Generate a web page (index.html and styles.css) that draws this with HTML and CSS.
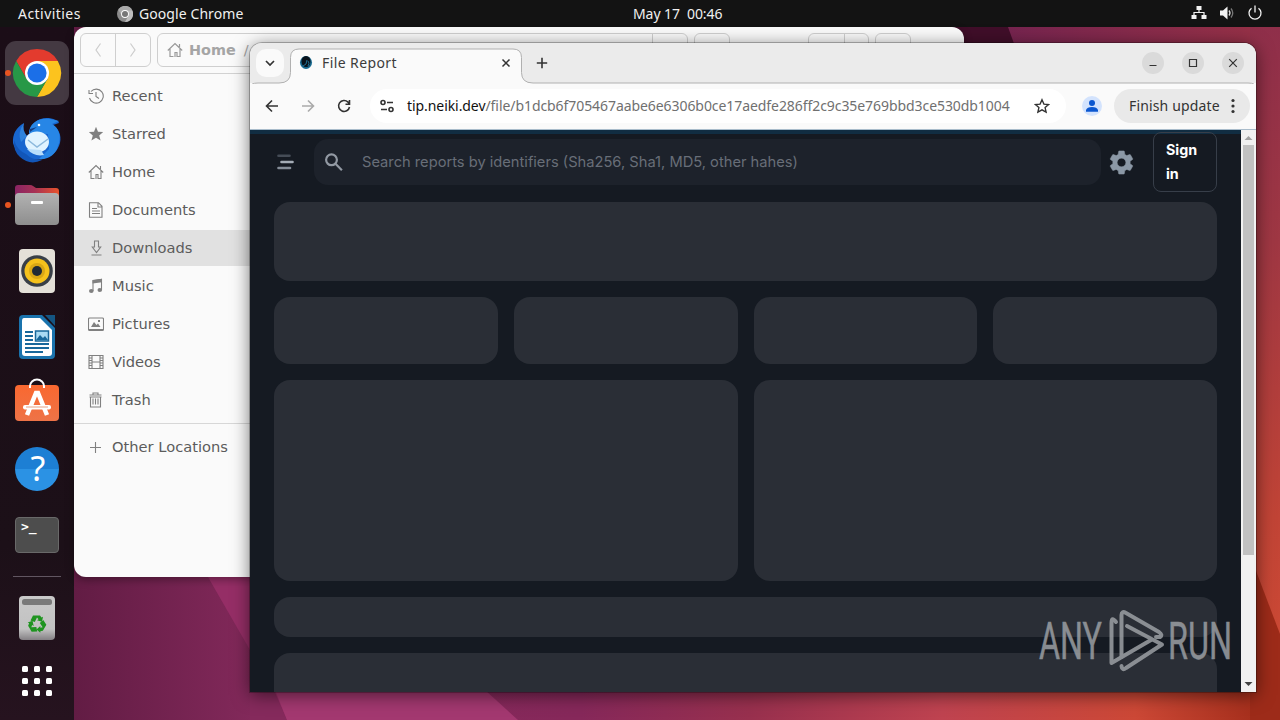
FILE: index.html
```html
<!DOCTYPE html>
<html lang="en">
<head>
<meta charset="utf-8">
<title>File Report</title>
<link rel="stylesheet" href="styles.css">
</head>
<body>
<div class="desktop">
  <svg class="wallpaper" width="1280" height="720" viewBox="0 0 1280 720">
    <defs>
      <linearGradient id="w1" x1="74" x2="1280" y1="0" y2="0" gradientUnits="userSpaceOnUse">
        <stop offset="0" stop-color="#621c44"/><stop offset=".16" stop-color="#852a5c"/><stop offset=".42" stop-color="#86285a"/><stop offset=".56" stop-color="#98304e"/><stop offset=".72" stop-color="#bf4350"/><stop offset=".88" stop-color="#cc4836"/><stop offset="1" stop-color="#9e2a17"/>
      </linearGradient>
      <linearGradient id="w2" x1="1008" x2="1280" y1="27" y2="27" gradientUnits="userSpaceOnUse">
        <stop offset="0" stop-color="#76244f"/><stop offset="1" stop-color="#993246"/>
      </linearGradient>
      <linearGradient id="w3" x1="0" x2="0" y1="27" y2="640" gradientUnits="userSpaceOnUse">
        <stop offset="0" stop-color="#8f2f4a"/><stop offset=".35" stop-color="#9f3743"/><stop offset=".8" stop-color="#c14436"/><stop offset="1" stop-color="#cc4935"/>
      </linearGradient>
    </defs>
    <rect width="1280" height="720" fill="url(#w1)"/>
    <path d="M208 577H300V720H287L275 693Q262 670 250 650Z" fill="#952e66"/>
    <path d="M250 650L275 693L287 720H250Z" fill="#852a5c"/>
    <path d="M275 690H485L518 720H287Z" fill="#a33870"/>
    <path d="M950 27H1060V60H950Z" fill="#400e29"/>
    <path d="M1008 27H1280V60H1020Z" fill="url(#w2)"/>
    <path d="M1250 27H1280V640L1250 555Z" fill="url(#w3)"/>
    <path d="M1250 555L1280 634V720H1250Z" fill="#9d2b19"/>
  </svg>

  <header class="topbar">
    <span class="activities">Activities</span>
    <span class="appmenu">
      <svg width="16" height="16" viewBox="0 0 16 16"><circle cx="8" cy="8" r="8" fill="#8b8b8b"/><path d="M8 4.200h7.200A8 8 0 0 0 1.200 3.800L4.600 9.600" fill="#a9a9a9"/><path d="M11.500 9.800L8 16a8 8 0 0 0 7.200-11.800H8" fill="#bdbdbd"/><circle cx="8" cy="8" r="3.900" fill="#fff"/><circle cx="8" cy="8" r="3" fill="#777"/></svg>
      <span>Google Chrome</span>
    </span>
    <span class="clock">May 17&nbsp; 00:46</span>
    <span class="tray">
      <svg width="16" height="16" viewBox="0 0 16 16" fill="#f2f2f2"><path d="M5.500 1h5v4h-5zM.5 10h5v4h-5zM10.500 10h5v4h-5z"/><path d="M8 5v2.500M3 10V7.500H13V10" fill="none" stroke="#f2f2f2" stroke-width="1.200"/></svg>
      <svg width="16" height="16" viewBox="0 0 16 16"><path d="M1 5.500h3L8.500 1.500v13L4 10.500H1z" fill="#f2f2f2"/><path d="M10 5.500q2 2.500 0 5" fill="none" stroke="#ddd" stroke-width="1.300"/><path d="M12 3.500q3.500 4.500 0 9" fill="none" stroke="#777" stroke-width="1.300"/></svg>
      <svg width="16" height="16" viewBox="0 0 16 16" fill="none" stroke="#f2f2f2" stroke-width="1.300"><path d="M4.500 3.200a6 6 0 1 0 7 0M8 .5v7"/></svg>
    </span>
  </header>

  <nav class="dock">
    <div class="dock-item active running">
      <svg width="50" height="50" viewBox="0 0 50 50"><path d="M25 13H45.800A24 24 0 0 0 4.200 13L14.600 31z" fill="#e33b2e"/><path d="M35.400 31L25 49A24 24 0 0 0 45.800 13H25z" fill="#fcc31e"/><path d="M14.600 31L4.200 13A24 24 0 0 0 25 49L35.400 31z" fill="#279847"/><circle cx="25" cy="25" r="12" fill="#fff"/><circle cx="25" cy="25" r="9.600" fill="#1b6fe8"/></svg>
    </div>
    <div class="dock-item">
      <svg class="bird" width="50" height="50" viewBox="0 0 50 50">
        <path d="M12 7Q0 14 1 27A24 21 0 0 0 48 27C50 19 46 12 41 9L47 7Q47 4 37 2C26 1 18 8 17 18L13 21Q9 14 12 7Z" fill="#1866cf"/>
        <path d="M17 17C17 8 26 1 38 3L47 5L40 8C47 12 50 21 46 30C44 39 35 44 27 43L37 33L36 18Z" fill="#2786e6"/>
        <path d="M2 24Q5 34 14 38Q20 44 30 44Q18 50 8 41Q1 35 2 24Z" fill="#1256b8"/>
        <path d="M12 7Q5 17 9 26L15 20Q10 14 12 7Z" fill="#2f83dd"/>
        <ellipse cx="25" cy="26" rx="12" ry="10.500" fill="#e0f3ff"/><path d="M15 33Q22 41 32 39L29 34Z" fill="#b7defb"/><path d="M16 24l9 7 11-8" fill="none" stroke="#8cb9dd" stroke-width="1.500"/><circle cx="27" cy="9" r="1.300" fill="#fff"/><path d="M18 13l7-2-7 5z" fill="#153d83"/>
      </svg>
    </div>
    <div class="dock-item running">
      <svg width="46" height="42" viewBox="0 0 46 42"><defs><linearGradient id="fo"><stop offset="0" stop-color="#8a2464"/><stop offset=".45" stop-color="#a73255"/><stop offset="1" stop-color="#e9532c"/></linearGradient><linearGradient id="fg" x2="0" y2="1"><stop stop-color="#b2b2b2"/><stop offset="1" stop-color="#8e8e8e"/></linearGradient></defs><path d="M1 4q0-3 3-3H16q2 0 3 1l3 2H42q3 0 3 3V20H1z" fill="url(#fo)"/><rect x="1" y="9" width="44" height="32" rx="4" fill="url(#fg)"/><rect x="17" y="17" width="12" height="3" rx="1" fill="#fff"/></svg>
    </div>
    <div class="dock-item">
      <svg width="38" height="46" viewBox="0 0 38 46"><rect x="1" y="1" width="36" height="44" rx="4" fill="#e4e0d8"/><circle cx="19" cy="23" r="15.800" fill="#393f47"/><circle cx="19" cy="23" r="12.500" fill="#f6c21c"/><circle cx="19" cy="23" r="8" fill="#d9a715"/><circle cx="19" cy="23" r="5" fill="#202a35"/></svg>
    </div>
    <div class="dock-item">
      <svg width="38" height="46" viewBox="0 0 38 46"><path d="M5 1H24L37 14V41q0 4-4 4H5q-4 0-4-4V5q0-4 4-4z" fill="#1a73ad"/><path d="M27 1h10v11z" fill="#145582"/><path d="M6 4H22L34 16V39q0 3-3 3H7q-3 0-3-3V7q0-3 2-3z" fill="#fff"/><path d="M7 18h8M7 22h8M7 26h8M7 30h24M7 34h24M7 38h18" stroke="#19689b" stroke-width="2"/><rect x="17.500" y="17" width="13" height="10" fill="#a9daf3" stroke="#19689b" stroke-width="1.500"/><path d="M18 26l4-5 3 3 2-2 3 4z" fill="#19689b"/></svg>
    </div>
    <div class="dock-item">
      <svg class="bag" width="46" height="44" viewBox="0 0 46 44"><defs><linearGradient id="ba" x2="0" y2="1"><stop stop-color="#f96830"/><stop offset="1" stop-color="#ee7347"/></linearGradient></defs><rect x="1" y="7" width="44" height="36" rx="4" fill="url(#ba)"/><path d="M16 10V8a7 6.500 0 0 1 14 0v2" fill="none" stroke="#fff" stroke-width="2"/><path d="M13 37L22 15h2l9 22" fill="none" stroke="#fff" stroke-width="4.500"/><rect x="9" y="27" width="28" height="4.500" rx="2" fill="#fff"/><path d="M12 29h22" stroke="#e7a083"/></svg>
    </div>
    <div class="dock-item"><div class="help">?</div></div>
    <div class="dock-item"><div class="terminal">&gt;_</div></div>
    <div class="dock-rule"></div>
    <div class="dock-item trash">
      <svg width="38" height="46" viewBox="0 0 38 46"><defs><linearGradient id="tr" x2="0" y2="1"><stop stop-color="#c9c9c9"/><stop offset=".75" stop-color="#c2c2c2"/><stop offset="1" stop-color="#848084"/></linearGradient></defs><rect x="1" y="1" width="36" height="44" rx="4" fill="url(#tr)"/><rect x="4" y="4" width="30" height="6" rx="2.500" fill="#797979"/><g fill="#1f9420"><path id="arm" d="M12.500 25.500l2.500-5h7l1.500 2 1.500-.8-1 5-5-1.500 1.500-1-1.500-1.700-2.200 4.500z"/><use href="#arm" transform="rotate(120 19 29)"/><use href="#arm" transform="rotate(240 19 29)"/></g></svg>
    </div>
    <div class="apps"><i></i><i></i><i></i><i></i><i></i><i></i><i></i><i></i><i></i></div>
  </nav>

  <section class="files">
    <div class="files-head">
      <div class="pair"><span><svg width="10" height="16" viewBox="0 0 10 16"><path d="M7.500 1.500L3 8l4.500 6.500"/></svg></span><span><svg width="10" height="16" viewBox="0 0 10 16"><path d="M2.500 1.500L7 8l-4.500 6.500"/></svg></span></div>
      <div class="path">
        <svg width="16" height="16" viewBox="0 0 16 16" fill="none" stroke="#999" stroke-width="1.200"><path d="M.8 8.500L8 1.500l7.200 7M3 7v7.500h3.500M13 7v7.500h-3M12.500 2v3M8 15v-4.500h2V15"/></svg>
        <b>Home</b><span class="slash">/</span><span class="path-end"></span>
      </div>
      <div class="box"></div>
      <div class="pair view"><span></span><span></span></div>
      <div class="box"></div>
    </div>
    <ul class="places">
      <li><svg viewBox="0 0 16 16"><path d="M3 3.500A7 7 0 1 1 1.500 10M1 2v3.500h4M8 4v4.500l3 2" /></svg><span>Recent</span></li>
      <li><svg viewBox="0 0 16 16"><path class="solid" d="M8 .8l2 5 5.200.2-4 3.400 1.400 5.200L8 11.700l-4.600 2.900L4.800 9.400.8 6 6 5.800z"/></svg><span>Starred</span></li>
      <li><svg viewBox="0 0 16 16"><path d="M.8 8.500L8 1.500l7.200 7M3 7v7.500h3.500M13 7v7.500h-3M12.500 2v3M8 15v-4.500h2V15"/></svg><span>Home</span></li>
      <li><svg viewBox="0 0 16 16"><path d="M2.500.7h8l3.500 3.600v11H1.500V.7zM10 1v4h4M4 6.500h5M4 9h8M4 11.500h8"/></svg><span>Documents</span></li>
      <li class="selected"><svg viewBox="0 0 16 16"><path d="M6.500 1h4v6h2.200L8.500 12.500 4.300 7h2.200zM3.500 15h10"/></svg><span>Downloads</span></li>
      <li><svg viewBox="0 0 16 16"><path d="M5 13V2.500l8.500-1.200V12"/><path class="solid" d="M4.500 2.200l9.500-1.400v3.400L4.500 5.500zM1 13a2.300 2 0 1 1 4.600 0a2.300 2 0 1 1-4.600 0M9.500 12a2.300 2 0 1 1 4.600 0a2.300 2 0 1 1-4.600 0"/></svg><span>Music</span></li>
      <li><svg viewBox="0 0 16 16"><path d="M1.500 2h13q1 0 1 1v10.500q0 1-1 1h-13q-1 0-1-1V3q0-1 1-1zM.5 13.500h15"/><path class="solid" d="M3 11l3-5 2.500 3L10 7.500l2.500 3.500zM10 4h2v2h-2z"/></svg><span>Pictures</span></li>
      <li><svg viewBox="0 0 16 16"><path d="M1 1.500h14v13H1zM4 1.500v13M12 1.500v13M4 8h8M1 4h3M1 6.500h3M1 9h3M1 11.500h3M12 4h3M12 6.500h3M12 9h3M12 11.500h3"/></svg><span>Videos</span></li>
      <li><svg viewBox="0 0 16 16"><path d="M1.500 3h12M5 3V1h5v2M1.500 5h12M2.500 5v10h10V5M5 6.500v6M7.500 6.500v6M10 6.500v6"/></svg><span>Trash</span></li>
      <li class="other"><svg viewBox="0 0 16 16"><path d="M7.500 2v11M2 7.500h11"/></svg><span>Other Locations</span></li>
    </ul>
  </section>

  <main class="browser">
    <div class="tabstrip">
      <svg class="tabshape" width="1006" height="41" viewBox="0 0 1006 41"><path d="M0 45Q0 40.500 8 40.500H29Q40.500 40.500 40.500 30V15Q40.500 6.500 49 6.500H263Q271.500 6.500 271.500 15V30Q271.500 40.500 283 40.500H998Q1006 40.500 1006 45" transform="translate(0 -.5)" fill="#fafafa" stroke="#b0b0b0"/></svg>
      <span class="tab-search"><svg width="12" height="12" viewBox="0 0 12 12"><path d="M2 4l4 4 4-4"/></svg></span>
      <div class="tab">
        <svg width="14" height="16" viewBox="0 0 14 16"><ellipse cx="7" cy="7.500" rx="6" ry="6.500" fill="#17698f"/><ellipse cx="7" cy="6.500" rx="4.500" ry="5.500" fill="#09131c"/><path d="M4 11q4-1 4-6M9 11q2-3 0-5" stroke="#216f91" fill="none"/></svg>
        <span class="tab-title">File Report</span>
        <svg width="10" height="10" viewBox="0 0 10 10" stroke="#333" stroke-width="1.500"><path d="M1.500 1.500l7 7M8.500 1.500l-7 7"/></svg>
      </div>
      <svg class="plus" width="12" height="12" viewBox="0 0 12 12" stroke="#333" stroke-width="1.600"><path d="M6 .8v10.400M.8 6h10.400"/></svg>
      <div class="controls">
        <span><svg width="10" height="10" viewBox="0 0 10 10"><path d="M1.500 7.500h7"/></svg></span>
        <span><svg width="10" height="10" viewBox="0 0 10 10"><path d="M1.500 1.500h7v7h-7z"/></svg></span>
        <span><svg width="10" height="10" viewBox="0 0 10 10"><path d="M1.200 1.200l7.600 7.600M8.800 1.200L1.200 8.800"/></svg></span>
      </div>
    </div>
    <div class="toolbar">
      <svg width="16" height="16" viewBox="0 0 16 16"><path d="M14 8H3M8 2.500L2.500 8 8 13.500"/></svg>
      <svg class="off" width="16" height="16" viewBox="0 0 16 16"><path d="M2 8h11M8 2.500L13.500 8 8 13.500"/></svg>
      <svg width="16" height="16" viewBox="0 0 16 16"><path d="M13.500 9A5.500 5.500 0 1 1 12 4.100L13.500 6M13.500 2v4.200H9.500"/></svg>
      <div class="omnibox">
        <svg width="16" height="16" viewBox="0 0 16 16"><circle cx="4" cy="4.500" r="2"/><path d="M8 4.500h6M2 11.500h6"/><circle cx="12" cy="11.500" r="2"/></svg>
        <span class="url"><b>tip.neiki.dev</b><span>/file/b1dcb6f705467aabe6e6306b0ce17aedfe286ff2c9c35e769bbd3ce530db1004</span></span>
        <svg width="16" height="16" viewBox="0 0 16 16"><path d="M8 1.800l1.900 4.300 4.700.4-3.500 3.100 1 4.600L8 11.800l-4.100 2.400 1-4.600L1.400 6.500l4.700-.4z" stroke-width="1.400"/></svg>
      </div>
      <span class="avatar"><svg width="14" height="14" viewBox="0 0 14 14"><circle cx="7" cy="4" r="3" fill="#0b57d0"/><path d="M1 12.800V11q1-3 6-3t6 3v1.800z" fill="#0b57d0"/></svg></span>
      <div class="update"><span>Finish update</span><svg width="4" height="16" viewBox="0 0 4 16"><circle cx="2" cy="2.500" r="1.600"/><circle cx="2" cy="8" r="1.600"/><circle cx="2" cy="13.500" r="1.600"/></svg></div>
    </div>
    <div class="viewport">
      <div class="page">
        <div class="page-head">
          <svg class="menu" width="20" height="20" viewBox="0 0 20 20" stroke-linecap="round" stroke-width="2.600"><path d="M3.500 3.700H14.500" stroke="#454c56"/><path d="M6.500 10H17.500" stroke="#a4acb6"/><path d="M3.500 16H15" stroke="#858d98"/></svg>
          <div class="search">
            <svg width="20" height="20" viewBox="0 0 20 20" fill="none" stroke="#9299a3" stroke-width="2.200"><circle cx="7.500" cy="7.800" r="5.400"/><path d="M11.500 11.800l6.400 6.400"/></svg>
            <span>Search reports by identifiers (Sha256, Sha1, MD5, other hahes)</span>
          </div>
          <svg class="gear" width="29" height="29" viewBox="0 0 24 24"><path fill="#8b98a6" d="M19.140 12.940c.04-.3.060-.61.060-.94s-.020-.64-.070-.94l2.030-1.580a.49.490 0 0 0 .12-.61l-1.920-3.320a.49.490 0 0 0-.59-.22l-2.390.96a7 7 0 0 0-1.620-.94l-.36-2.540A.48.480 0 0 0 13.920 2.400h-3.840a.48.480 0 0 0-.48.410l-.36 2.540c-.59.240-1.130.57-1.620.94l-2.390-.96a.48.480 0 0 0-.59.220L2.720 8.870a.48.480 0 0 0 .12.610l2.030 1.580c-.05.3-.09.630-.09.940s.020.64.070.94l-2.030 1.580a.49.490 0 0 0-.12.610l1.920 3.320c.12.220.37.290.59.220l2.390-.96c.5.380 1.030.7 1.620.94l.36 2.540c.05.240.24.410.48.410h3.840c.24 0 .44-.17.47-.41l.36-2.540c.59-.24 1.130-.56 1.620-.94l2.390.96c.22.080.47 0 .59-.22l1.920-3.320a.48.480 0 0 0-.12-.61zM12 15.600a3.600 3.600 0 1 1 0-7.200 3.600 3.600 0 0 1 0 7.200z" stroke="#8b98a6" stroke-width=".4"/></svg>
          <div class="signin">Sign in</div>
        </div>
        <div class="skeletons">
          <div class="bone full h79"></div>
          <div class="bone h67"></div><div class="bone h67"></div><div class="bone h67"></div><div class="bone h67"></div>
          <div class="bone half h201"></div><div class="bone half h201"></div>
          <div class="bone full h40"></div>
          <div class="bone full h67"></div>
        </div>
      </div>
      <div class="scrollbar">
        <svg width="15" height="15" viewBox="0 0 15 15"><path d="M3.500 10h8L7.500 6z" fill="#a3a3a3"/></svg>
        <div class="thumb"></div>
        <svg width="15" height="15" viewBox="0 0 15 15"><path d="M3.500 5h8L7.500 9z" fill="#404040"/></svg>
      </div>
    </div>
  </main>

  <svg class="watermark" width="240" height="80" viewBox="0 0 240 80">
    <g class="wm-text"><text x="4" y="54" textLength="63" lengthAdjust="spacingAndGlyphs">ANY</text><text x="133" y="54" textLength="64" lengthAdjust="spacingAndGlyphs">RUN</text></g>
    <g fill="none" stroke="#9b9fa4" stroke-width="4" stroke-linejoin="round" stroke-linecap="round"><path d="M81 17Q76.500 11 76.500 18V58L116 35"/><path d="M86.500 52V10Q86.500 5.500 91 8L124 27Q128 30 125 32L121 32"/><path d="M92 21L127 39.500L91 63Q87 66 86.500 61"/></g>
  </svg>
</div>
</body>
</html>
```
FILE: styles.css
```css
* { box-sizing: border-box; }
body { margin: 0; overflow: hidden; background: #5e1a40; font-family: "Noto Sans", "Open Sans", sans-serif; }
svg { display: block; flex: none; }
.desktop { position: relative; width: 1280px; height: 720px; overflow: hidden; }
.wallpaper { position: absolute; inset: 0; }

.topbar { position: relative; height: 27px; background: #131313; color: #f0f0f0; display: flex; align-items: center; font-size: 14px; line-height: 27px; padding: 0 17px 0 18px; }
.activities { width: 99px; letter-spacing: .45px; }
.appmenu { display: flex; align-items: center; gap: 6px; width: 516px; letter-spacing: .08px; }
.clock { width: 90px; white-space: pre; letter-spacing: -.08px; }
.tray { margin-left: auto; display: flex; gap: 12px; }
.tray svg { margin-top: -2px; }

.dock { position: absolute; left: 0; top: 27px; width: 74px; height: 693px; background: linear-gradient(#1b0d17, #1c1018 75%, #26131f); padding-top: 14px; display: flex; flex-direction: column; align-items: center; gap: 2px; }
.dock-item { position: relative; width: 64px; height: 64px; border-radius: 11px; display: flex; align-items: center; justify-content: center; flex: none; }
.dock-item.active { background: #443942; }
.running::before { content: ""; position: absolute; left: 0; top: 29px; width: 6px; height: 6px; border-radius: 50%; background: #e95420; }
.bird { margin-top: 4px; }
.bag { margin-bottom: 6px; }
.help { width: 44px; height: 44px; border-radius: 50%; background: linear-gradient(#1d7fd4 50%, #2b92e4 50%); color: #fff; font: 34px/43px "Noto Sans", sans-serif; text-align: center; padding-left: 2px; }
.terminal { width: 44px; height: 36px; border-radius: 4px; background: #4d4d4d; border: 1px solid #696969; color: #fff; font: bold 13px/17px "DejaVu Sans Mono", monospace; padding-left: 5px; }
.dock-rule { width: 48px; height: 1px; background: #615661; margin: 7px 0 6px; flex: none; }
.trash { padding-top: 2px; }
.apps { display: grid; grid-template-columns: repeat(3, 6px); gap: 6px; margin-top: 15px; }
.apps i { height: 6px; border-radius: 1.500px; background: #fff; }

.files { position: absolute; left: 74px; top: 27px; width: 890px; height: 550px; background: #fafafa; border-radius: 12px; overflow: hidden; font-family: "DejaVu Sans", sans-serif; color: #5c5c5c; box-shadow: 0 3px 9px rgba(0,0,0,.35); }
.files-head { height: 47px; border-bottom: 1px solid #d2d2d2; display: flex; padding: 6px; }
.pair, .path, .box { height: 34px; border: 1px solid #cfcfcf; border-radius: 6px; display: flex; }
.pair { width: 71px; margin-right: 6px; }
.pair span { flex: 1; display: flex; align-items: center; justify-content: center; }
.pair span + span { border-left: 1px solid #cfcfcf; }
.pair svg { fill: none; stroke: #ccc; stroke-width: 1.200; }
.path { width: 531px; align-items: center; padding: 0 0 1px 9px; gap: 6px; font-size: 14.400px; line-height: 16px; color: #a5a5a5; }
.slash { margin-left: 2px; }
.path-end { margin-left: auto; width: 35px; height: 32px; margin-bottom: -1px; border-left: 1px solid #cfcfcf; }
.box { width: 36px; margin-left: 6px; }
.pair.view { width: 61px; margin-left: 78px; margin-right: 0; }
.view span:first-child { flex: 0 0 35px; }
.places { list-style: none; margin: 0; padding: 4px 0; display: flex; flex-direction: column; gap: 2px; }
.places li { height: 36px; display: flex; align-items: center; gap: 8px; padding-left: 14px; font-size: 14.670px; }
.places span { padding-bottom: 2px; }
.places svg { width: 16px; height: 16px; fill: none; stroke: #808080; stroke-width: 1.100; }
.places .solid { fill: #808080; stroke: none; }
.places .selected { background: #e1e1e1; }
.places .other { border-top: 1px solid #d7d7d7; height: 48px; margin-top: 3px; }

.browser { position: absolute; left: 250px; top: 43px; width: 1006px; height: 649px; border-radius: 12px 12px 0 0; overflow: hidden; background: #fafafa; }
.browser { box-shadow: 0 0 0 1px rgba(0,0,0,.25), 0 3px 18px rgba(0,0,0,.55); }
.tabstrip { position: relative; height: 40px; background: #ebebeb; display: flex; align-items: center; padding: 0 13px 0 6px; }
.tabshape { position: absolute; left: 0; top: 0; }
.tab-search { position: relative; width: 28px; height: 28px; border-radius: 10px; background: #fafafa; display: flex; align-items: center; justify-content: center; }
.tab-search svg { fill: none; stroke: #333; stroke-width: 1.700; }
.tab { position: relative; display: flex; align-items: center; width: 232px; margin-left: 6px; padding: 0 11px 0 9px; font-size: 14px; color: #3c3c3c; }
.tab-title { margin-left: 9px; flex: 1; letter-spacing: .4px; padding-bottom: 2px; }
.plus { position: relative; margin-left: 14px; }
.controls { position: relative; margin-left: auto; margin-right: -1px; display: flex; gap: 18px; }
.controls span { width: 22px; height: 22px; border-radius: 50%; background: #dadada; display: flex; align-items: center; justify-content: center; }
.controls svg { fill: none; stroke: #333; stroke-width: 1.200; }
.toolbar { height: 47px; border-bottom: 1px solid #a9bccb; display: flex; align-items: center; padding: 0 6px 0 14px; gap: 20px; }
.toolbar svg { fill: none; stroke: #333; stroke-width: 1.600; }
.toolbar .off { stroke: #aaa; }
.omnibox { width: 696px; height: 34px; margin-left: -2px; border-radius: 17px; background: #fff; display: flex; align-items: center; padding: 0 16px 0 9px; gap: 12px; }
.url { flex: 1; font-size: 14px; color: #707070; white-space: nowrap; letter-spacing: -.07px; padding-bottom: 1px; }
.url b { font-weight: 400; color: #111; }
.avatar { width: 20px; height: 20px; margin-left: -4px; border-radius: 50%; background: #d3e3fd; display: flex; align-items: center; justify-content: center; }
.avatar svg { stroke: none; }
.update { width: 136px; height: 34px; margin-left: -8px; border-radius: 17px; background: #e9e9e9; color: #333; font-size: 14px; letter-spacing: .15px; display: flex; align-items: center; justify-content: space-between; padding: 0 15px; white-space: nowrap; }
.update span { padding-bottom: 1px; }
.update svg { fill: #333; stroke: none; }

.viewport { display: flex; height: 562px; }
.page { width: 991px; background: linear-gradient(#112d42 4px, #151a22 4px); padding: 2px 24px 0; overflow: hidden; }
.page-head { height: 60px; display: flex; align-items: center; }
.menu { fill: none; margin-left: 1px; }
.search { width: 787px; height: 46px; margin-left: 19px; border-radius: 14px; background: #1d222b; display: flex; align-items: center; padding: 0 0 1px 10px; gap: 18px; color: #686e78; font: 14.680px "Inter", sans-serif; white-space: nowrap; }
.gear { margin-left: 6px; }
.signin { margin-left: auto; width: 64px; height: 60px; padding: 5px 12px; border: 1px solid #373e49; border-radius: 8px; color: #fff; font: bold 14.300px/24px "Inter", sans-serif; }
.skeletons { margin-top: 10px; display: grid; grid-template-columns: repeat(4, 1fr); gap: 16px; }
.bone { background: #2a2e36; border-radius: 16px; }
.full { grid-column: span 4; }
.half { grid-column: span 2; }
.h79 { height: 79px; }
.h67 { height: 67px; }
.h201 { height: 201px; }
.h40 { height: 40px; }
.scrollbar { width: 15px; background: #f1f1f1; display: flex; flex-direction: column; }
.thumb { height: 410px; width: 11px; margin: 0 2px auto; background: #c1c1c1; }
.watermark { position: absolute; left: 1035px; top: 605px; opacity: .85; }
.wm-text { font: 400 52px "Roboto", sans-serif; fill: #9b9fa4; stroke: #9b9fa4; stroke-width: .5; }
```
